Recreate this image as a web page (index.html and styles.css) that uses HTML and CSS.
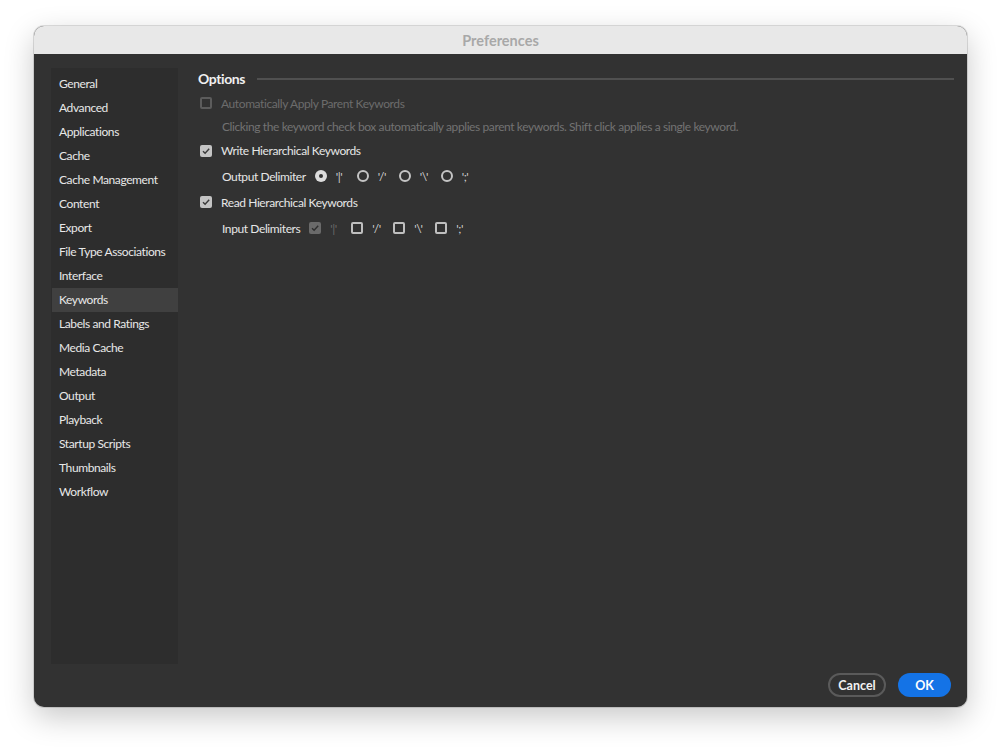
FILE: index.html
```
<!DOCTYPE html>
<html>
<head>
<meta charset="utf-8">
<link rel="stylesheet" href="styles.css">
</head>
<body>
<div class="window">
  <div class="titlebar">Preferences</div>
  <div class="content">
    <nav class="sidebar">
      <div class="item">General</div>
      <div class="item">Advanced</div>
      <div class="item">Applications</div>
      <div class="item">Cache</div>
      <div class="item">Cache Management</div>
      <div class="item">Content</div>
      <div class="item">Export</div>
      <div class="item">File Type Associations</div>
      <div class="item">Interface</div>
      <div class="item selected">Keywords</div>
      <div class="item">Labels and Ratings</div>
      <div class="item">Media Cache</div>
      <div class="item">Metadata</div>
      <div class="item">Output</div>
      <div class="item">Playback</div>
      <div class="item">Startup Scripts</div>
      <div class="item">Thumbnails</div>
      <div class="item">Workflow</div>
    </nav>
    <main class="main">
      <div class="section-head"><span class="section-title">Options</span><span class="rule"></span></div>
      <div class="row r-auto disabled"><span class="cb"></span><span>Automatically Apply Parent Keywords</span></div>
      <div class="row r-desc desc">Clicking the keyword check box automatically applies parent keywords. Shift click applies a single keyword.</div>
      <div class="row r-write"><span class="cb checked"><svg viewBox="0 0 12 12"><path d="M3 6.2 L5.1 8.3 L9.2 3.8" /></svg></span><span>Write Hierarchical Keywords</span></div>
      <div class="row r-sub indent">
        <span class="sublabel">Output Delimiter</span>
        <span class="opt"><span class="radio on"></span><span class="delim">'|'</span></span>
        <span class="opt"><span class="radio"></span><span class="delim">'/'</span></span>
        <span class="opt"><span class="radio"></span><span class="delim">'\'</span></span>
        <span class="opt"><span class="radio"></span><span class="delim">';'</span></span>
      </div>
      <div class="row r-read"><span class="cb checked"><svg viewBox="0 0 12 12"><path d="M3 6.2 L5.1 8.3 L9.2 3.8" /></svg></span><span>Read Hierarchical Keywords</span></div>
      <div class="row r-sub indent">
        <span class="sublabel">Input Delimiters</span>
        <span class="opt dis"><span class="cb checked dim"><svg viewBox="0 0 12 12"><path d="M3 6.2 L5.1 8.3 L9.2 3.8" /></svg></span><span class="delim">'|'</span></span>
        <span class="opt"><span class="cb"></span><span class="delim">'/'</span></span>
        <span class="opt"><span class="cb"></span><span class="delim">'\'</span></span>
        <span class="opt"><span class="cb"></span><span class="delim">';'</span></span>
      </div>
    </main>
  </div>
  <div class="footer">
    <button class="btn cancel">Cancel</button>
    <button class="btn ok">OK</button>
  </div>
</div>
</body>
</html>
```
FILE: styles.css
```
html, body {
  margin: 0;
  padding: 0;
  background: #ffffff;
  width: 1001px;
  height: 749px;
  overflow: hidden;
}
body {
  font-family: "Lato", "Open Sans", sans-serif;
  font-size: 12px;
  letter-spacing: -0.4px;
  color: #e6e6e6;
}
.window {
  margin: 26px 0 0 34px;
  width: 933px;
  height: 681px;
  border-radius: 10px;
  overflow: hidden;
  background: #323232;
  box-shadow: 0 0 0 1px rgba(0,0,0,0.12), 0 10px 30px rgba(0,0,0,0.22);
  display: flex;
  flex-direction: column;
}
.titlebar {
  height: 28px;
  flex: none;
  background: #e8e8e8;
  color: #a8a8a8;
  font-weight: 700;
  font-size: 14.5px;
  letter-spacing: 0;
  display: flex;
  align-items: center;
  justify-content: center;
}
.content {
  flex: 1;
  display: flex;
  padding: 14px 13px 0 17px;
  min-height: 0;
}
.sidebar {
  width: 127px;
  flex: none;
  background: #2d2d2d;
  padding-top: 4px;
  box-sizing: border-box;
}
.item {
  height: 24px;
  line-height: 24px;
  padding-left: 7px;
  margin-left: 1px;
  white-space: nowrap;
  color: #e8e8e8;
}
.item.selected {
  background: #404040;
}
.main {
  flex: 1;
  padding-left: 20px;
  margin-top: -1px;
  display: flex;
  flex-direction: column;
}
.section-head {
  display: flex;
  align-items: center;
  height: 22px;
}
.section-title {
  font-weight: 700;
  font-size: 14px;
  color: #f0f0f0;
}
.rule {
  flex: 1;
  height: 2px;
  background: #505050;
  margin-left: 12px;
  margin-top: 2px;
}
.row {
  display: flex;
  align-items: center;
  white-space: nowrap;
  height: 24px;
}
.r-auto { margin-top: 2px; }
.r-desc { height: 23px; }
.r-write { height: 25px; }
.r-sub { height: 26px; }
.r-read { height: 26px; }
.disabled { color: #6c6c6c; }
.desc { color: #737373; padding-left: 24px; }
.indent { padding-left: 24px; }
.cb {
  width: 12px;
  height: 12px;
  box-sizing: border-box;
  border: 2px solid #bfbfbf;
  border-radius: 2px;
  margin: 0 9px 0 2px;
  flex: none;
  display: inline-flex;
}
.disabled .cb { border-color: #5c5c5c; }
.cb.checked {
  background: #c4c4c4;
  border: none;
}
.cb.checked svg {
  width: 12px;
  height: 12px;
}
.cb.checked path {
  fill: none;
  stroke: #3a3a3a;
  stroke-width: 1.4;
}
.cb.dim {
  background: #6a6a6a;
}
.cb.dim path { stroke: #2e2e2e; }
.sublabel {
  margin-right: 5px;
}
.opt {
  display: inline-flex;
  align-items: center;
}
.opt .cb { margin: 0 9px 0 4px; }
.radio {
  width: 12px;
  height: 12px;
  box-sizing: border-box;
  border: 2px solid #c4c4c4;
  border-radius: 50%;
  margin: 0 9px 0 4px;
  flex: none;
}
.radio.on {
  background: #dcdcdc;
  border: none;
  position: relative;
}
.radio.on::after {
  content: "";
  position: absolute;
  left: 4px;
  top: 4px;
  width: 4px;
  height: 4px;
  border-radius: 50%;
  background: #323232;
}
.delim {
  font-size: 12px;
  letter-spacing: -0.5px;
  width: 17px;
  color: #d0d0d0;
}
.opt.dis .delim { color: #6a6a6a; }
.footer {
  height: 43px;
  flex: none;
  display: flex;
  justify-content: flex-end;
  align-items: flex-start;
  padding: 9px 16px 0 0;
  box-sizing: border-box;
  gap: 12px;
}
.btn {
  font-family: inherit;
  font-weight: 700;
  font-size: 12.5px;
  letter-spacing: 0;
  height: 24px;
  border-radius: 12px;
  color: #f2f2f2;
  padding: 0;
  cursor: default;
}
.cancel {
  width: 58px;
  background: transparent;
  border: 2px solid #5a5a5a;
}
.ok {
  width: 53px;
  background: #1473e6;
  border: none;
  color: #ffffff;
}
```
